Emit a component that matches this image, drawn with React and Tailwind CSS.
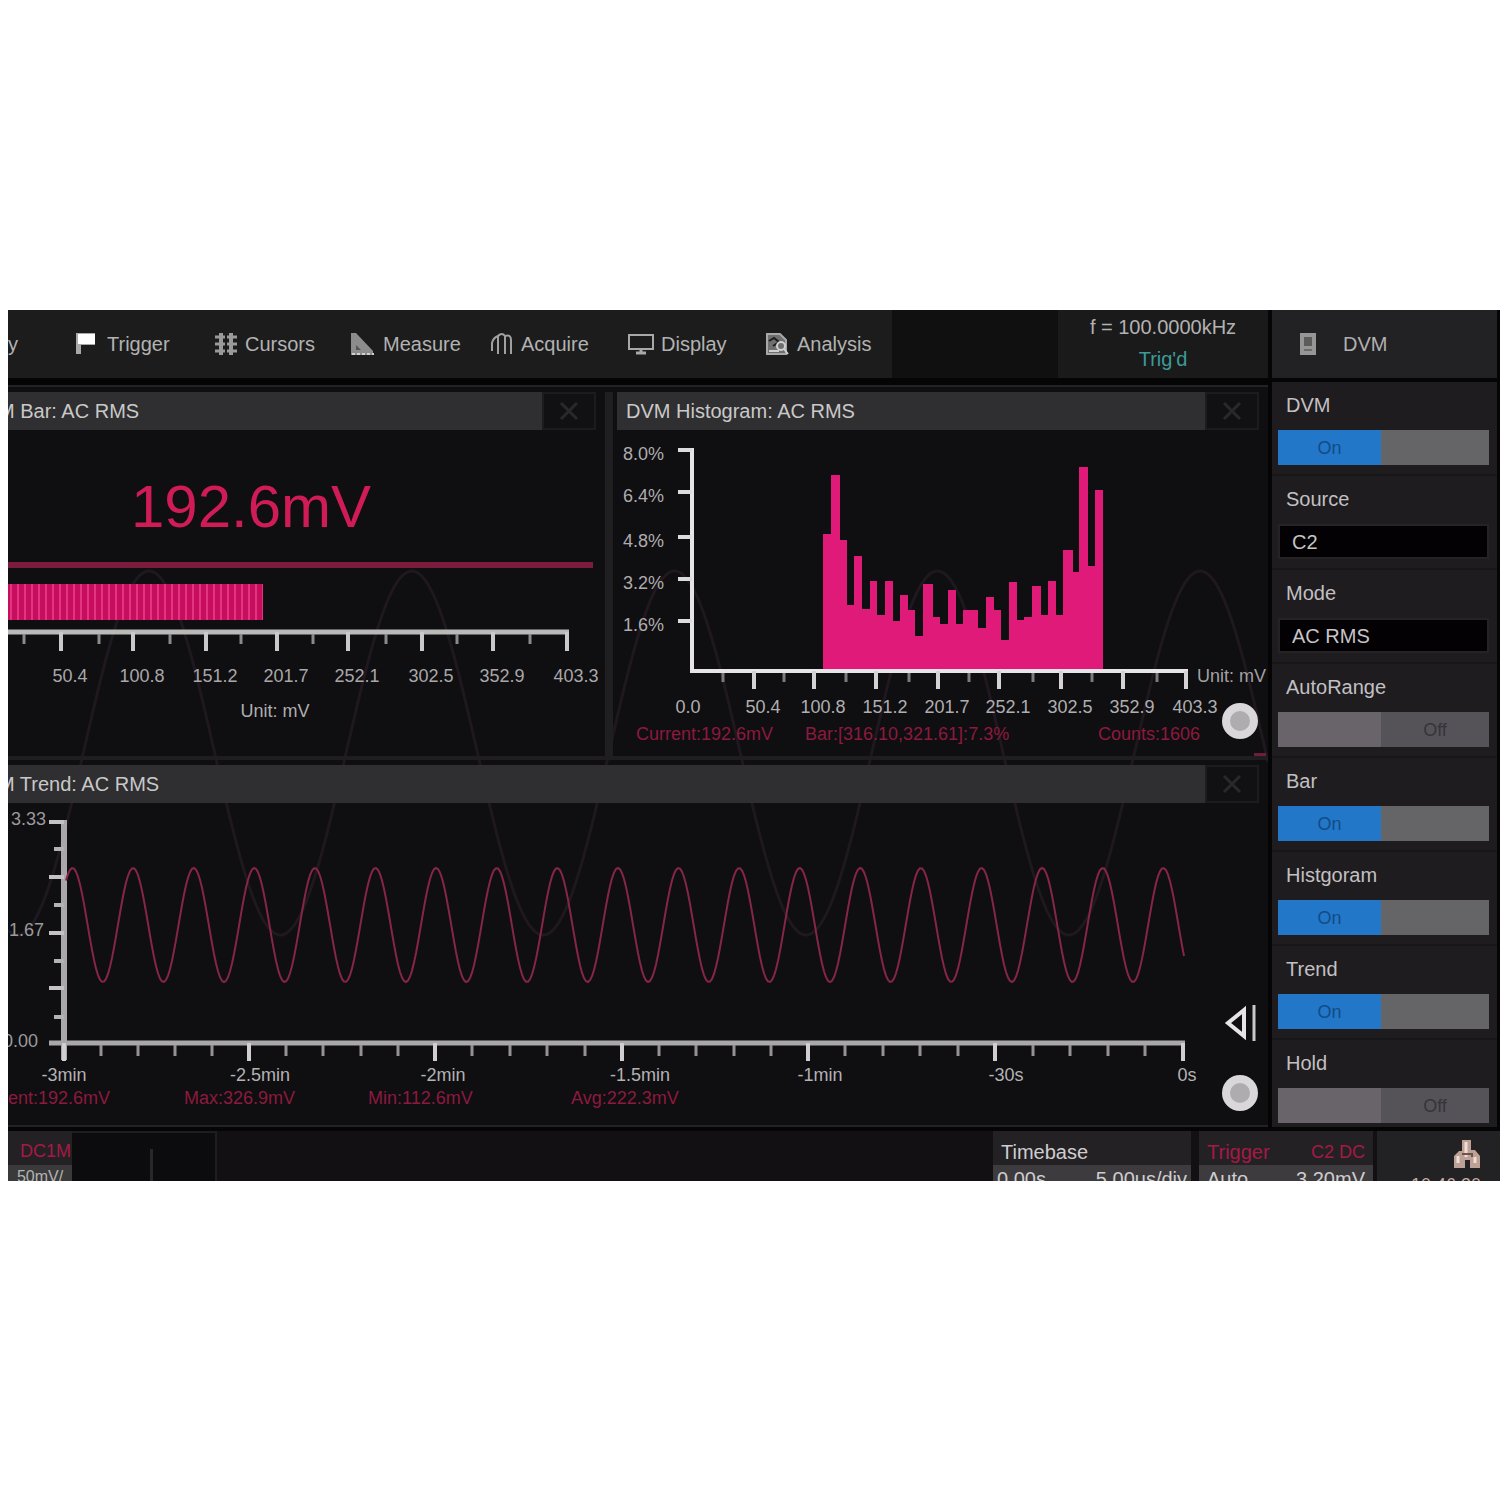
import React from 'react';

const menuItems = [
  { name: 'Trigger', icon: TriggerIcon },
  { name: 'Cursors', icon: CursorsIcon },
  { name: 'Measure', icon: MeasureIcon },
  { name: 'Acquire', icon: AcquireIcon },
  { name: 'Display', icon: DisplayIcon },
  { name: 'Analysis', icon: AnalysisIcon },
];

const barTicks = [
  { x: 61, label: '50.4' },
  { x: 133, label: '100.8' },
  { x: 206, label: '151.2' },
  { x: 277, label: '201.7' },
  { x: 348, label: '252.1' },
  { x: 422, label: '302.5' },
  { x: 493, label: '352.9' },
  { x: 567, label: '403.3' },
];
const barMinorTicks = [24, 99, 170, 241, 313, 386, 457, 530];

const histTicks = [
  { x: 754, label: '50.4' },
  { x: 814, label: '100.8' },
  { x: 876, label: '151.2' },
  { x: 938, label: '201.7' },
  { x: 999, label: '252.1' },
  { x: 1061, label: '302.5' },
  { x: 1123, label: '352.9' },
  { x: 1186, label: '403.3' },
];
const histMinorTicks = [723, 784, 846, 909, 969, 1033, 1092, 1157];
const histLevels = [
  { y: 450, label: '8.0%' },
  { y: 492, label: '6.4%' },
  { y: 537, label: '4.8%' },
  { y: 579, label: '3.2%' },
  { y: 621, label: '1.6%' },
];

// [left edge, top] of every bin, the last one ends at histEnd
const histBins = [
  [823, 534], [831, 475], [840, 540], [847, 605], [854, 556], [862, 609],
  [870, 581], [877, 615], [885, 581], [893, 621], [900, 595], [908, 610],
  [915, 636], [923, 584], [933, 617], [940, 624], [948, 590], [956, 624],
  [963, 610], [978, 628], [986, 597], [994, 610], [1001, 640], [1009, 582],
  [1017, 620], [1024, 617], [1032, 586], [1041, 615], [1048, 581],
  [1056, 615], [1063, 550], [1073, 572], [1079, 467], [1088, 566],
  [1095, 490],
];
const histEnd = 1103;

const trendTicks = [
  { x: 64, label: '-3min', at: 64 },
  { x: 249, label: '-2.5min', at: 260 },
  { x: 435, label: '-2min', at: 443 },
  { x: 622, label: '-1.5min', at: 640 },
  { x: 808, label: '-1min', at: 820 },
  { x: 995, label: '-30s', at: 1006 },
  { x: 1183, label: '0s', at: 1187 },
];
const trendStats = [
  { x: -27, text: 'Current:192.6mV' },
  { x: 184, text: 'Max:326.9mV' },
  { x: 368, text: 'Min:112.6mV' },
  { x: 571, text: 'Avg:222.3mV' },
];

const settings = [
  { id: 'dvm', label: 'DVM', on: true },
  { id: 'source', label: 'Source', value: 'C2' },
  { id: 'mode', label: 'Mode', value: 'AC RMS' },
  { id: 'autorange', label: 'AutoRange', on: false },
  { id: 'bar', label: 'Bar', on: true },
  { id: 'histogram', label: 'Histgoram', on: true },
  { id: 'trend', label: 'Trend', on: true },
  { id: 'hold', label: 'Hold', on: false },
];

function wavePath(from, to, peak, period, mid, amp) {
  const points = [];
  for (let x = from; x <= to; x += 2) {
    const y = mid - amp * Math.cos(((x - peak) / period) * 2 * Math.PI);
    points.push(`${x} ${y.toFixed(1)}`);
  }
  return 'M' + points.join('L');
}

function TriggerIcon() {
  return (
    <svg viewBox="0 0 26 26" className="w-[26px] h-[26px]">
      <path d="M1 2H20V14H6V23H1Z" fill="#a8a8a8" />
      <path d="M3 3H20V13H3Z" fill="#fff" />
    </svg>
  );
}

function CursorsIcon() {
  return (
    <svg viewBox="0 0 26 26" className="w-[26px] h-[26px]" stroke="#9a9a9a" fill="none">
      <path d="M8 2V24M18 2V24" strokeWidth="4" />
      <path d="M2 6H24M2 13H24M2 20H24" strokeWidth="3" strokeDasharray="10 2" />
    </svg>
  );
}

function MeasureIcon() {
  return (
    <svg viewBox="0 0 26 26" className="w-[26px] h-[26px]">
      <path d="M0 2H5L22 20V24H0Z" fill="#8c8c8c" />
      <path d="M5 14L10 19H5Z" fill="#555" />
      <path d="M1 23H23" stroke="#d0d0d0" strokeWidth="2" strokeDasharray="3 2" />
    </svg>
  );
}

function AcquireIcon() {
  return (
    <svg viewBox="0 0 26 26" className="w-[26px] h-[26px]" stroke="#a0a0a0" strokeWidth="2" fill="none">
      <path d="M3 20V12Q4 7 9 5V23" />
      <path d="M9 5Q13 1 16 5V23" />
      <path d="M16 5Q22 3 22 9V23" />
    </svg>
  );
}

function DisplayIcon() {
  return (
    <svg viewBox="0 0 28 26" className="w-[28px] h-[26px]" stroke="#a8a8a8" strokeWidth="3" fill="none">
      <path d="M2 4H26V18H2Z" strokeWidth="2" />
      <path d="M14 18V22M9 22H19" />
    </svg>
  );
}

function AnalysisIcon() {
  return (
    <svg viewBox="0 0 26 26" className="w-[26px] h-[26px]" fill="none">
      <path d="M2 3H15L21 9V23H2Z" fill="#6f6f6f" stroke="#a8a8a8" strokeWidth="2" />
      <path d="M4 10L9 7L14 11L8 15" stroke="#1c1c1c" strokeWidth="2" />
      <circle cx="16" cy="15" r="4" stroke="#d0d0d0" strokeWidth="2" />
      <path d="M4 20H14M19 18L23 23" stroke="#d0d0d0" strokeWidth="2" />
    </svg>
  );
}

function MeterIcon() {
  return (
    <svg viewBox="0 0 18 24" className="w-[18px] h-[24px]">
      <path d="M1 1H17V23H1Z" fill="#969696" />
      <path d="M5 5H13V14H5Z" fill="#5c5c5c" />
      <path d="M5 18H13" stroke="#6c6c6c" strokeWidth="2" />
    </svg>
  );
}

function NetworkIcon() {
  return (
    <svg viewBox="0 0 28 32" className="block h-8 w-7 shrink-0">
      <path d="M9 1H18V11H22L27 17V29H17V21H12V29H1V17L6 12H9Z" fill="#bda096" />
      <path d="M13 3V18M5 17V24M22 18V24" stroke="#efddd4" strokeWidth="3" />
      <path d="M9 15H19V18" stroke="#6b544c" strokeWidth="2" fill="none" />
    </svg>
  );
}

function PanelTitle({ children, className }) {
  return (
    <div className="relative flex h-[38px] items-stretch pr-[9px]">
      <h2 className={`flex-1 flex items-center overflow-hidden whitespace-nowrap bg-[#2f2e30] text-xl text-[#c9c9c9] ${className}`}>
        {children}
      </h2>
      <button aria-label="Close" className="w-[54px] flex items-center justify-center bg-[#111012] border-2 border-[#1c1b1d]">
        <svg viewBox="0 0 20 20" className="w-5 h-5" stroke="#29282b" strokeWidth="3">
          <path d="M2 2L18 18M18 2L2 18" />
        </svg>
      </button>
    </div>
  );
}

function Knob({ cx, cy }) {
  return (
    <g>
      <circle cx={cx} cy={cy} r="18" fill="#d9d7d9" />
      <circle cx={cx} cy={cy} r="10" fill="#aeacae" />
    </g>
  );
}

function BarPanel() {
  return (
    <section>
      <PanelTitle className="pl-0">
        <span className="-ml-[10px]">M Bar: AC RMS</span>
      </PanelTitle>
      <svg viewBox="8 430 597 326" className="block w-full h-auto" fontSize="18">
        <text x="251" y="527" fontSize="60" fill="#cf1c56" textAnchor="middle">192.6mV</text>
        <path d="M8 565H593" stroke="#7c1c3d" strokeWidth="6" />
        <path d="M8 602H263" stroke="#c60d5e" strokeWidth="36" />
        <path d="M10 602H263" stroke="#e2347f" strokeWidth="36" strokeDasharray="2 5" />
        <path d="M8 632H569" stroke="#b9b9b9" strokeWidth="5" />
        {barMinorTicks.map((x) => (
          <path key={x} d={`M${x} 634V644`} stroke="#8a8a8a" strokeWidth="3" />
        ))}
        {barTicks.map((tick) => (
          <g key={tick.x}>
            <path d={`M${tick.x} 632V651`} stroke="#c9c9c9" strokeWidth="4" />
            <text x={tick.x + 9} y="682" fill="#a9a7a9" textAnchor="middle">{tick.label}</text>
          </g>
        ))}
        <text x="275" y="717" fill="#b0aeb0" textAnchor="middle">Unit: mV</text>
      </svg>
    </section>
  );
}

function HistogramPanel() {
  const outline = histBins
    .map(([x, y], i) => `L${x} ${y}H${i + 1 < histBins.length ? histBins[i + 1][0] : histEnd}`)
    .join('');

  return (
    <section className="pl-1">
      <PanelTitle className="pl-[9px]">DVM Histogram: AC RMS</PanelTitle>
      <svg viewBox="617 430 651 326" className="block w-full h-auto" fontSize="18">
        <path d={`M${histBins[0][0]} 671${outline}V671Z`} fill="#df1a78" />
        <path d="M692 448V671H1188" stroke="#e6e4e6" strokeWidth="4" fill="none" />
        {histLevels.map((level) => (
          <g key={level.y}>
            <path d={`M678 ${level.y}H692`} stroke="#dcdcdc" strokeWidth="4" />
            <text x="664" y={level.y + 10} fill="#aeacae" textAnchor="end">{level.label}</text>
          </g>
        ))}
        {histMinorTicks.map((x) => (
          <path key={x} d={`M${x} 673V682`} stroke="#7c7a7c" strokeWidth="3" />
        ))}
        <text x="688" y="713" fill="#b0aeb0" textAnchor="middle">0.0</text>
        {histTicks.map((tick) => (
          <g key={tick.x}>
            <path d={`M${tick.x} 671V689`} stroke="#d4d2d4" strokeWidth="4" />
            <text x={tick.x + 9} y="713" fill="#b0aeb0" textAnchor="middle">{tick.label}</text>
          </g>
        ))}
        <text x="1197" y="682" fill="#a3a1a3">Unit: mV</text>
        <g fill="#8c1a3e">
          <text x="636" y="740">Current:192.6mV</text>
          <text x="805" y="740">Bar:[316.10,321.61]:7.3%</text>
          <text x="1098" y="740">Counts:1606</text>
        </g>
        <Knob cx={1240} cy={721} />
        <path d="M1254 755H1266" stroke="#6b2038" strokeWidth="4" />
      </svg>
    </section>
  );
}

function TrendPanel() {
  const minor = [];
  trendTicks.slice(0, -1).forEach((tick, i) => {
    const step = (trendTicks[i + 1].x - tick.x) / 5;
    for (let n = 1; n < 5; n++) minor.push(Math.round(tick.x + step * n));
  });

  return (
    <section>
      <PanelTitle className="pl-0">
        <span className="-ml-[10px]">M Trend: AC RMS</span>
      </PanelTitle>
      <svg viewBox="8 803 1260 322" className="block w-full h-auto" fontSize="18">
        <path d="M64 820V1060" stroke="#a9a7a9" strokeWidth="6" />
        <path d="M49 1043H1185" stroke="#a9a7a9" strokeWidth="5" />
        {[822, 877, 933, 988].map((y) => (
          <path key={y} d={`M49 ${y}H64`} stroke="#c4c2c4" strokeWidth="4" />
        ))}
        {[849, 905, 961, 1017].map((y) => (
          <path key={y} d={`M54 ${y}H64`} stroke="#b4b2b4" strokeWidth="4" />
        ))}
        {minor.map((x) => (
          <path key={x} d={`M${x} 1045V1056`} stroke="#949294" strokeWidth="3" />
        ))}
        {trendTicks.map((tick) => (
          <g key={tick.x}>
            <path d={`M${tick.x} 1043V1061`} stroke="#d0ced0" strokeWidth="4" />
            <text x={tick.at} y="1081" fill="#b4b2b4" textAnchor="middle">{tick.label}</text>
          </g>
        ))}
        <g fill="#9c9a9c" textAnchor="end">
          <text x="46" y="825">3.33</text>
          <text x="44" y="936">1.67</text>
          <text x="38" y="1047">0.00</text>
        </g>
        <path d={wavePath(66, 1185, 72.5, 60.6, 925, 57)} stroke="#86254a" strokeWidth="2" fill="none" />
        {trendStats.map((stat) => (
          <text key={stat.x} x={stat.x} y="1104" fill="#8c1a3e">{stat.text}</text>
        ))}
        <path d="M1244 1010L1228 1023L1244 1036Z" stroke="#e6e4e6" strokeWidth="4" fill="none" />
        <path d="M1254 1005V1041" stroke="#c9c7c9" strokeWidth="3" />
        <Knob cx={1240} cy={1093} />
      </svg>
    </section>
  );
}

function Toggle({ id, on }) {
  return (
    <button id={id} role="switch" aria-checked={on} className="flex h-[35px] w-full text-lg">
      <span className={`flex w-[103px] items-center justify-center h-full ${on ? 'bg-[#2277c9] text-[#124b85]' : 'bg-[#68646a]'}`}>
        {on ? 'On' : ''}
      </span>
      <span className={`flex flex-1 items-center justify-center h-full ${on ? 'bg-[#656466]' : 'bg-[#565358] text-[#363438]'}`}>
        {on ? '' : 'Off'}
      </span>
    </button>
  );
}

function Sidebar() {
  return (
    <aside className="w-[228px] shrink-0 bg-[#050505] pr-[3px]">
      <div className="flex h-[68px] items-center bg-[#222123] pl-[27px] text-xl text-[#b0b0b0]">
        <MeterIcon />
        <span className="ml-[26px]">DVM</span>
      </div>
      <div className="mt-1 border-b-4 border-[#050505] bg-[#1e1c1f]">
        {settings.map((item) => (
          <div key={item.id} className="flex flex-col gap-[13px] border-b-2 border-[#171618] pt-[11px] pb-[9px] pl-[6px] pr-2 last:border-0 last:pb-1">
            <label htmlFor={item.id} className="pl-2 text-xl leading-6 text-[#c2c0c2]">{item.label}</label>
            {item.value ? (
              <select id={item.id} defaultValue={item.value} className="h-[35px] w-full appearance-none border-2 border-[#252326] bg-[#030104] pl-3 text-xl leading-6 text-[#c6c4c6]">
                <option>{item.value}</option>
              </select>
            ) : (
              <Toggle id={item.id} on={item.on} />
            )}
          </div>
        ))}
      </div>
    </aside>
  );
}

function StatusBar() {
  return (
    <footer className="flex h-[50px] overflow-hidden bg-[#121013] text-lg leading-6">
      <div className="w-16 shrink-0 bg-[#232123] pt-2">
        <div className="pl-3 text-[#a51a45]">DC1M</div>
        <div className="mt-[2px] bg-[#3a3a3b] text-center text-base leading-6 text-[#b4b4b4]">50mV/</div>
      </div>
      <div className="w-[145px] shrink-0 border-t-2 border-r-2 border-[#1f1d20] bg-[#0c0b0d] pl-[78px] pt-4">
        <div className="h-8 w-[3px] bg-[#29272a]" />
      </div>
      <div className="flex-1" />
      <div className="w-[198px] shrink-0 bg-[#232124]">
        <div className="flex h-[34px] items-center px-2 pt-2 text-xl leading-6 text-[#cfcdcf]">Timebase</div>
        <div className="flex justify-between bg-[#3d3b3e] px-1 pt-[2px] text-xl leading-6 text-[#cfcdcf]">
          <span>0.00s</span>
          <span>5.00us/div</span>
        </div>
      </div>
      <div className="ml-2 w-[174px] shrink-0 bg-[#232124]">
        <div className="flex h-[34px] items-center justify-between px-2 pt-2 text-[#a51a45]">
          <span className="text-xl leading-6">Trigger</span>
          <span>C2 DC</span>
        </div>
        <div className="flex justify-between bg-[#3d3b3e] px-2 pt-[2px] text-xl leading-6 text-[#cfcdcf]">
          <span>Auto</span>
          <span>3.20mV</span>
        </div>
      </div>
      <div className="ml-1 flex w-[123px] shrink-0 flex-col items-end bg-[#222123] pr-[19px] pt-2 text-[#c9a9a0]">
        <NetworkIcon />
        <div className="pt-[2px]">10:46:30</div>
      </div>
    </footer>
  );
}

export default function App() {
  return (
    <div className="min-h-screen bg-white pt-[310px] pl-2 font-['Liberation_Sans',Arial,sans-serif]">
      <main className="overflow-hidden bg-[#050505]">
        <div className="flex">
          <div className="min-w-0 flex-1 pr-1">
            <header className="flex h-[68px] bg-[#101011] text-xl text-[#b2b2b2]">
              <nav className="flex bg-[#1c1c1d]">
                <a href="#utility" className="flex w-[67px] items-center">y</a>
                {menuItems.map(({ name, icon: Icon }) => (
                  <button key={name} className="flex w-[138px] items-center gap-[6px] last:w-[127px]">
                    <Icon />
                    {name}
                  </button>
                ))}
              </nav>
              <div className="ml-auto flex w-[210px] flex-col items-center gap-2 bg-[#1a1a1b] pt-[5px] leading-6">
                <span>f = 100.0000kHz</span>
                <span className="text-[#3a9c99]">Trig'd</span>
              </div>
            </header>

            <div className="relative mt-[7px] border-y-2 border-[#232225] bg-[#0f0e11] pt-[5px]">
              {/* live channel trace, showing through under the panels */}
              <svg viewBox="8 387 1260 740" className="absolute inset-x-0 top-0 w-full h-auto">
                <path d={wavePath(8, 1268, 149, 262.8, 753, 182)} stroke="#1f181f" strokeWidth="3" fill="none" />
              </svg>
              <div className="relative grid grid-cols-[597fr_663fr] border-b-4 border-[#1f1d20]">
                <BarPanel />
                <div className="border-l-8 border-[#1f1e21]">
                  <HistogramPanel />
                </div>
              </div>
              <div className="relative pt-[5px]">
                <TrendPanel />
              </div>
            </div>
          </div>
          <Sidebar />
        </div>
        <StatusBar />
      </main>
    </div>
  );
}
